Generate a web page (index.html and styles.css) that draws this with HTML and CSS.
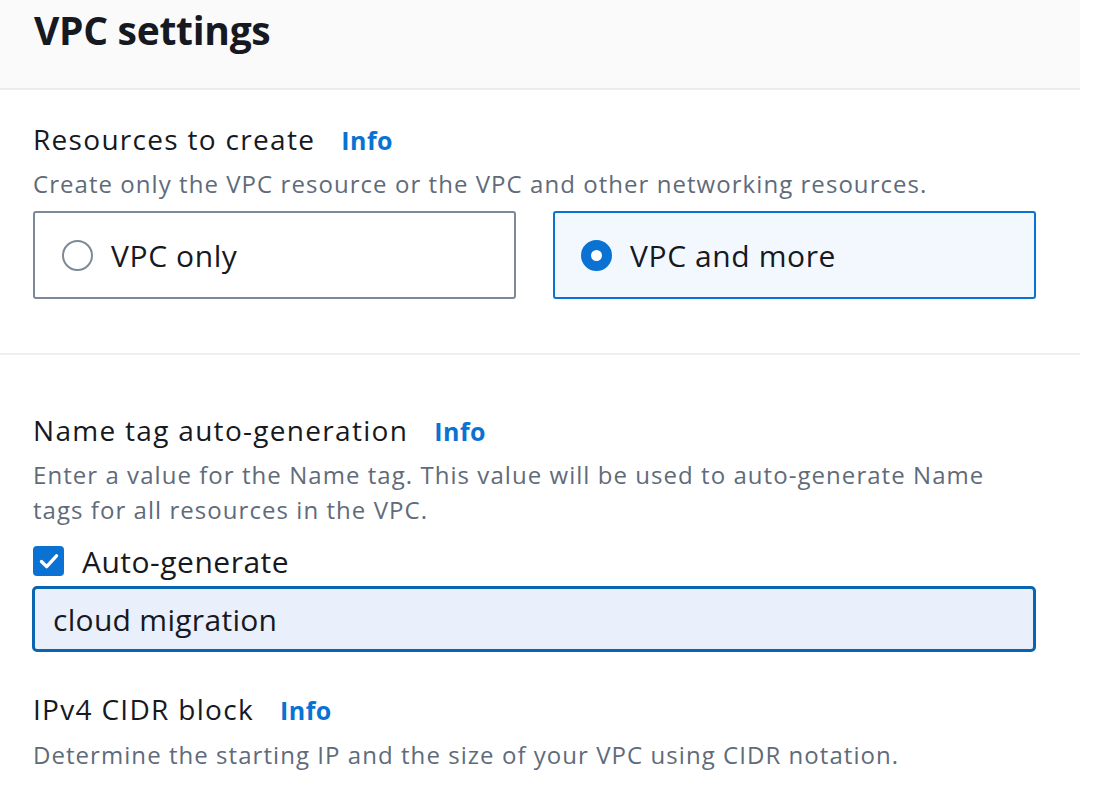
FILE: index.html
```html
<!DOCTYPE html>
<html lang="en">
<head>
<meta charset="utf-8">
<title>VPC settings</title>
<link rel="stylesheet" href="styles.css">
</head>
<body>
<div class="panel">
  <div class="panel-header">
    <h2 class="panel-title">VPC settings</h2>
  </div>

  <div class="section section-resources">
    <div class="field-label">
      <span class="label-text">Resources to create</span>
      <a class="info-link">Info</a>
    </div>
    <p class="field-desc">Create only the VPC resource or the VPC and other networking resources.</p>
    <div class="tiles">
      <div class="tile">
        <span class="radio"></span>
        <span class="tile-text">VPC only</span>
      </div>
      <div class="tile tile-selected">
        <span class="radio radio-checked"></span>
        <span class="tile-text">VPC and more</span>
      </div>
    </div>
  </div>

  <div class="section section-name">
    <div class="field-label">
      <span class="label-text">Name tag auto-generation</span>
      <a class="info-link">Info</a>
    </div>
    <p class="field-desc field-desc-wrap">Enter a value for the Name tag. This value will be used to auto-generate Name tags for all resources in the VPC.</p>
    <div class="checkbox-row">
      <span class="checkbox">
        <svg viewBox="0 0 32 32" width="32" height="32"><path d="M8 16.5 L13.5 22 L24 10.5" fill="none" stroke="#fff" stroke-width="3.6" stroke-linecap="round" stroke-linejoin="round"/></svg>
      </span>
      <span class="checkbox-text">Auto-generate</span>
    </div>
    <div class="text-input">cloud migration</div>

    <div class="field-label field-label-cidr">
      <span class="label-text">IPv4 CIDR block</span>
      <a class="info-link">Info</a>
    </div>
    <p class="field-desc field-desc-last">Determine the starting IP and the size of your VPC using CIDR notation.</p>
  </div>
</div>
</body>
</html>
```

FILE: styles.css
```css
* { box-sizing: border-box; }

html, body {
  margin: 0;
  padding: 0;
  background: #ffffff;
}

body {
  font-family: "Open Sans", "Noto Sans", sans-serif;
  color: #16191f;
}

.panel {
  width: 1080px;
}

.panel-header {
  height: 90px;
  background: #fafafa;
  border-bottom: 2px solid #e9ebed;
  padding: 4px 34px 0;
}

.panel-title {
  margin: 0;
  font-size: 39px;
  line-height: 52px;
  font-weight: 700;
  letter-spacing: -0.3px;
  color: #16191f;
}

.section {
  padding: 0 44px 0 33px;
}

.section-resources {
  padding-top: 32px;
  height: 265px;
  border-bottom: 2px solid #eeeff1;
}

.field-label {
  display: flex;
  align-items: baseline;
  gap: 26px;
  height: 34px;
}

.label-text {
  font-size: 28px;
  line-height: 34px;
  letter-spacing: 1.3px;
  color: #16191f;
}

.info-link {
  font-size: 25px;
  font-weight: 700;
  letter-spacing: 0.5px;
  color: #0972d3;
}

.field-desc {
  margin: 10px 0 0;
  font-size: 24px;
  line-height: 35px;
  color: #5f6b7a;
  letter-spacing: 1.05px;
}

.tiles {
  display: grid;
  grid-template-columns: 483px 483px;
  gap: 37px;
  margin-top: 10px;
}

.tile {
  height: 88px;
  border: 2px solid #7d8998;
  border-radius: 3px;
  display: flex;
  align-items: center;
  padding-left: 27px;
  gap: 18px;
}

.tile-selected {
  border-color: #0972d3;
  background: #f2f8fd;
  padding-left: 26px;
}

.radio {
  width: 31px;
  height: 31px;
  border-radius: 50%;
  border: 2px solid #7d8998;
  flex: none;
}

.radio-checked {
  border: 10px solid #0972d3;
  background: #ffffff;
}

.tile-text {
  font-size: 30px;
  letter-spacing: 0.6px;
  color: #16191f;
}

.section-name {
  padding-top: 58px;
}

.field-desc-wrap {
  width: 1003px;
}

.checkbox-row {
  display: flex;
  align-items: center;
  gap: 18px;
  margin-top: 14px;
  height: 40px;
}

.checkbox {
  width: 31px;
  height: 30px;
  border-radius: 4px;
  background: #0972d3;
  display: flex;
  align-items: center;
  justify-content: center;
  flex: none;
}

.checkbox svg { display: block; width: 30px; height: 30px; }

.checkbox-text {
  font-size: 30px;
  letter-spacing: 0.5px;
  color: #16191f;
}

.text-input {
  width: 1004px;
  height: 66px;
  margin: 5px 0 0 -1px;
  border: 3px solid #0a64b0;
  border-radius: 5px;
  background: #e9f0fb;
  padding-left: 18px;
  display: flex;
  align-items: center;
  font-size: 30px;
  letter-spacing: 0.3px;
  color: #16191f;
}

.field-label-cidr {
  margin-top: 40px;
}

.field-desc-last {
  margin-top: 11px;
}
```
